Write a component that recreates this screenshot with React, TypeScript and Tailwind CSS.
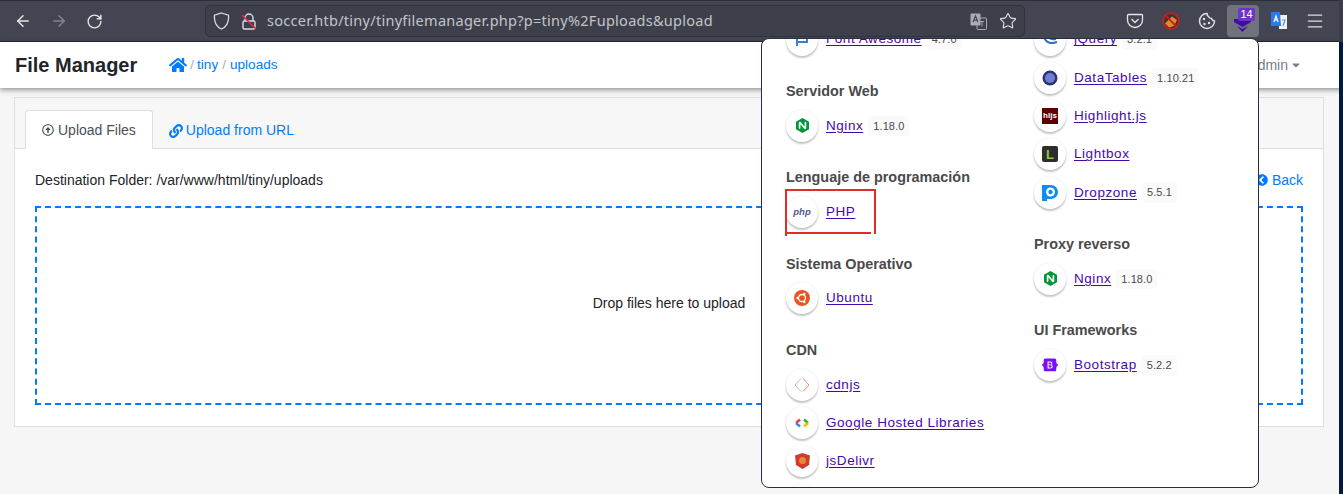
import { ReactNode } from 'react'
import { ArrowLeft, ArrowRight, RotateCw, Star, Menu } from 'lucide-react'
import { FaHome, FaLink, FaRegArrowAltCircleUp, FaChevronCircleLeft, FaCaretDown } from 'react-icons/fa'
import { SiNginx, SiBootstrap } from 'react-icons/si'

const Circle = ({ children }: { children?: ReactNode }) => (
    <div className="flex h-8 w-8 shrink-0 items-center justify-center rounded-full bg-white shadow-[0_2px_2px_rgba(0,0,0,0.22),0_0_2px_rgba(0,0,0,0.1)]">
        {children}
    </div>
)

const Tech = ({ icon, name, version }: { icon: ReactNode; name: string; version?: string }) => (
    <div className="flex h-8 items-center">
        <Circle>{icon}</Circle>
        <span className="ml-2 text-[13.5px] tracking-[0.55px] text-[#4608ad] underline underline-offset-2">{name}</span>
        {version && <span className="ml-[5px] rounded-[4px] bg-[#fafafa] px-[5px] py-[2px] text-[11px] tracking-[0.1px] text-[#4a4a4a]">{version}</span>}
    </div>
)

const Heading = ({ children }: { children: ReactNode }) => (
    <div className="mt-[27.500px] mb-[10.800px] h-4 text-[14.4px] leading-4 font-bold text-[#4a4a4a]">{children}</div>
)

const nginx = <SiNginx className="text-[#009639]" size={15} />

const App = () => {
    return (
        <div className="relative h-[494px] w-[1343px] overflow-hidden bg-[#f6f6f6] font-['Liberation_Sans',sans-serif] text-[14px] text-[#212529]">
            {/* browser toolbar */}
            <div className="flex h-[42px] items-center border-t border-b border-t-[#2b2e38] border-b-[#23252d] bg-[#434652]">
                <div className="flex w-[205px] items-center gap-[18px] pl-[14px]">
                    <ArrowLeft size={18} className="text-[#e6e6e8]" />
                    <ArrowRight size={18} className="text-[#83858d]" />
                    <RotateCw size={17} className="text-[#e6e6e8]" />
                </div>
                <div className="flex h-[32px] w-[820px] items-center rounded-[5px] border border-[#30323b] bg-[#3d404b] pl-[7px]">
                    <svg width="17" height="18" viewBox="0 0 17 18" fill="none" stroke="#dcdde0" strokeWidth="1.3">
                        <path d="M8.500 1L15.500 3.200C16 9 14 14.500 8.500 17 3 14.500 1 9 1.500 3.200z" />
                    </svg>
                    <svg className="ml-[11px]" width="16" height="17" viewBox="0 0 16 17" fill="none" stroke="#dcdde0" strokeWidth="1.4">
                        <path d="M4 8V5a4 4 0 0 1 8 0v3" />
                        <rect x="2" y="8" width="12" height="8" rx="1.500" />
                        <path d="M1 2l14 14" stroke="#e22850" strokeWidth="1.500" />
                    </svg>
                    <span className="ml-[10px] font-['Noto_Sans',sans-serif] text-[14.5px] tracking-[0.27px] text-[#c3c4c8]">soccer.htb/tiny/tinyfilemanager.php?p=tiny%2Fuploads&amp;upload</span>
                    <div className="ml-auto flex items-center gap-[12px] pr-[7px]">
                        <svg width="17" height="17" viewBox="0 0 17 17">
                            <rect x="0.500" y="0.500" width="10" height="12" rx="1" fill="#a9abb1" />
                            <rect x="7" y="5" width="9.500" height="11.500" rx="1" fill="none" stroke="#a9abb1" />
                            <path d="M3 9l2.500-6 2.500 6M3.800 7.200h3.400" fill="none" stroke="#3d404b" strokeWidth="1.100" />
                            <path d="M10 8.500h4M12 8.500v5" stroke="#a9abb1" />
                        </svg>
                        <Star size={18} className="text-[#dcdde0]" strokeWidth={1.5} />
                    </div>
                </div>
                <div className="ml-[101px] flex items-center">
                    <svg width="18" height="18" viewBox="0 0 18 18" fill="none" stroke="#e6e6e8" strokeWidth="1.300">
                        <path d="M2.500 2.500h13c.6 0 1 .4 1 1V8a7.500 7.500 0 0 1-15 0V3.500c0-.6.4-1 1-1z" />
                        <path d="M5.500 7l3.500 3.500L12.500 7" />
                    </svg>
                    <svg className="ml-[18px]" width="18" height="18" viewBox="0 0 18 18">
                        <circle cx="9" cy="9" r="7.800" fill="#3a3436" stroke="#c81e1e" strokeWidth="1.800" />
                        <path d="M3 11.500L10 4.500l5 3.500-3 6-5 1.500z" fill="#e8882a" />
                        <path d="M3.200 3.200l11.600 11.600" stroke="#c81e1e" strokeWidth="1.800" />
                    </svg>
                    <svg className="ml-[18px]" width="18" height="18" viewBox="0 0 18 18" fill="none" stroke="#e0e0e3" strokeWidth="1.500">
                        <path d="M9 1.500a7.500 7.500 0 1 0 7.500 7.500 3.500 3.500 0 0 1-3-2.500 3.500 3.500 0 0 1-3-2A3.500 3.500 0 0 1 9 1.500z" />
                        <circle cx="6" cy="7" r="1.200" fill="#e0e0e3" stroke="none" />
                        <circle cx="6.500" cy="12" r="1.200" fill="#e0e0e3" stroke="none" />
                        <circle cx="11" cy="11" r="1.200" fill="#e0e0e3" stroke="none" />
                    </svg>
                    <div className="relative ml-[11px] flex h-[32px] w-[32px] items-center justify-center rounded-[4px] bg-[#70727c]">
                        <svg className="mt-[9px] mr-[1px]" width="17" height="13" viewBox="0 0 17 13" fill="#3f0ca8">
                            <path d="M0 0h17v3L8.500 8 0 3z" />
                            <path d="M3 7l5.500 3L14 7l-5.500 6z" />
                        </svg>
                        <div className="absolute top-[3px] left-[11px] w-[17px] rounded-[2px] bg-[#6f35c4] text-center text-[11px] leading-[13px] text-white">14</div>
                    </div>
                    <svg className="ml-[11px]" width="18" height="18" viewBox="0 0 18 18">
                        <path d="M9 3h8v14H9z" fill="#f2f2f2" />
                        <path d="M1 0h9l1 14H1z" fill="#2a7be8" />
                        <path d="M4 10l2-6 2 6M4.600 8h2.800" fill="none" stroke="#fff" strokeWidth="1.200" />
                        <path d="M12 8h3l-2 6" fill="none" stroke="#5a8fd8" strokeWidth="1.200" />
                    </svg>
                    <Menu size={20} className="ml-[17px] text-[#dcdde0]" strokeWidth={1.5} />
                </div>
            </div>

            {/* page navbar */}
            <div className="relative flex h-[46px] items-center bg-white pl-[15px] shadow-[0_2px_5px_rgba(0,0,0,0.4)]">
                <span className="text-[20px] font-bold text-[#212529]">File Manager</span>
                <div className="ml-[32px] flex items-center text-[13.6px] text-[#007bff]">
                    <FaHome size={18} />
                    <span className="mx-[3px] text-[#a8adb2]">/</span>
                    <span>tiny</span>
                    <span className="mx-[4px] text-[#a8adb2]">/</span>
                    <span>uploads</span>
                </div>
                <div className="mr-[41px] ml-auto flex items-center text-[14px] text-[#7b7e82]">
                    <span>Admin</span>
                    <FaCaretDown size={12} className="ml-[2px]" />
                </div>
            </div>

            {/* upload card */}
            <div className="mx-[14px] mt-[9px] h-[330px] w-[1310px] border border-[#dfdfdf]">
                <div className="flex h-[51px] items-end border-b border-[#dfdfdf] bg-[#f7f7f7] pl-[10px]">
                    <div className="mb-[-1px] flex h-[39px] items-center gap-[4px] rounded-t-[3px] border border-b-0 border-[#dfdfdf] bg-white px-[16px] text-[#495057]">
                        <FaRegArrowAltCircleUp size={12} />
                        <span>Upload Files</span>
                    </div>
                    <div className="flex h-[39px] items-center gap-[3px] pt-[4px] pr-[17px] pl-[16px] text-[#007bff]">
                        <FaLink size={14} />
                        <span>Upload from URL</span>
                    </div>
                </div>
                <div className="h-[277px] bg-white px-[20px] pt-[22px]">
                    <div className="flex h-[18px] items-center justify-between">
                        <span>Destination Folder: /var/www/html/tiny/uploads</span>
                        <span className="flex items-center gap-[4px] text-[#007bff]">
                            <FaChevronCircleLeft size={12} />
                            Back
                        </span>
                    </div>
                    <div className="mt-[17px] flex h-[199px] items-center justify-center border-2 border-dashed border-[#007bff] pb-[4px]">
                        Drop files here to upload
                    </div>
                </div>
            </div>

            <div className="absolute top-0 right-0 h-[42px] w-[4px] bg-[#3a3d47]" />
            <div className="absolute top-[42px] right-0 bottom-0 w-[4px] bg-[#06193a]" />

            {/* wappalyzer popup */}
            <div className="absolute top-[38px] left-[761px] flex h-[450px] w-[498px] overflow-hidden rounded-[8px] border border-[#2d2b45] bg-white pl-[24px]">
                <div className="mt-[-16px] w-[248px] pt-[0.500px]">
                    <Tech
                        icon={
                            <svg width="16" height="16" viewBox="0 0 16 16" fill="none" stroke="#3b7dd8" strokeWidth="2">
                                <path d="M3 2v12M3 3h10v7H3" />
                            </svg>
                        }
                        name="Font Awesome"
                        version="4.7.0"
                    />
                    <Heading>Servidor Web</Heading>
                    <Tech icon={nginx} name="Nginx" version="1.18.0" />
                    <Heading>Lenguaje de programación</Heading>
                    <Tech icon={<span className="text-[9.500px] font-semibold italic text-[#4f5b93]">php</span>} name="PHP" />
                    <Heading>Sistema Operativo</Heading>
                    <Tech
                        icon={
                            <svg width="16" height="16" viewBox="0 0 16 16" fill="none">
                                <circle cx="8" cy="8" r="8" fill="#e95420" />
                                <circle cx="8" cy="8" r="3.500" stroke="#fff" strokeWidth="1.300" />
                                <circle cx="3.500" cy="8" r="1.200" fill="#fff" />
                                <circle cx="10.300" cy="4" r="1.200" fill="#fff" />
                                <circle cx="10.300" cy="12" r="1.200" fill="#fff" />
                            </svg>
                        }
                        name="Ubuntu"
                    />
                    <Heading>CDN</Heading>
                    <div className="flex flex-col gap-[6.300px]">
                        <Tech
                            icon={
                                <svg width="16" height="16" viewBox="0 0 16 16" fill="none" strokeWidth="1">
                                    <path d="M7 1.500L1 8l6 6.500" stroke="#bdbdbd" />
                                    <path d="M9 1.500L15 8l-6 6.500" stroke="#f58a6e" />
                                </svg>
                            }
                            name="cdnjs"
                        />
                        <Tech
                            icon={
                                <svg width="16" height="10" viewBox="0 0 16 10" fill="none" strokeWidth="2.500">
                                    <path d="M6 1.500L2 5" stroke="#ea4335" />
                                    <path d="M2 5l4 3.500" stroke="#4285f4" />
                                    <path d="M10 1.500L14 5" stroke="#34a853" />
                                    <path d="M14 5l-4 3.500" stroke="#fbbc05" />
                                </svg>
                            }
                            name="Google Hosted Libraries"
                        />
                        <Tech
                            icon={
                                <svg width="15" height="16" viewBox="0 0 15 16">
                                    <path d="M7.500 0L15 2.500 14 12l-6.500 4L1 12 0 2.500z" fill="#d13b2e" />
                                    <circle cx="7.500" cy="7.500" r="3.500" fill="#e8863a" />
                                </svg>
                            }
                            name="jsDelivr"
                        />
                        <Circle />
                    </div>
                </div>
                <div className="mt-[-16px] flex flex-col pt-[0.500px]">
                    <div className="flex flex-col gap-[6.300px]">
                        <Tech
                            icon={
                                <svg width="18" height="18" viewBox="0 0 18 18" fill="none" stroke="#2b6cc4" strokeWidth="2">
                                    <path d="M3 4c0 6 5 10 13 7" />
                                    <path d="M7 3c0 4 3 6 8 5" />
                                </svg>
                            }
                            name="jQuery"
                            version="3.2.1"
                        />
                        <Tech
                            icon={
                                <svg width="16" height="16" viewBox="0 0 16 16">
                                    <circle cx="8" cy="8" r="7.500" fill="#2c3570" />
                                    <circle cx="8" cy="8" r="5" fill="#6f7fd6" />
                                </svg>
                            }
                            name="DataTables"
                            version="1.10.21"
                        />
                        <Tech
                            icon={<div className="flex h-4 w-4 items-center justify-center bg-[#600000] text-[8px] font-bold text-white">hljs</div>}
                            name="Highlight.js"
                        />
                        <Tech
                            icon={<div className="flex h-4 w-4 items-center justify-center rounded-[2px] bg-[#2d2d2d] text-[13px] leading-none font-bold text-[#8cc63f]">L</div>}
                            name="Lightbox"
                        />
                        <Tech
                            icon={
                                <svg width="16" height="16" viewBox="0 0 16 16">
                                    <path d="M0 0h9a7 7 0 0 1 0 14H5v2H0z" fill="#0d8cf2" />
                                    <circle cx="8.500" cy="7" r="4.500" fill="#fff" />
                                    <circle cx="8.500" cy="7" r="2.200" fill="#0d8cf2" />
                                </svg>
                            }
                            name="Dropzone"
                            version="5.5.1"
                        />
                    </div>
                    <Heading>Proxy reverso</Heading>
                    <Tech icon={nginx} name="Nginx" version="1.18.0" />
                    <Heading>UI Frameworks</Heading>
                    <Tech icon={<SiBootstrap className="text-[#7a10f7]" size={16} />} name="Bootstrap" version="5.2.2" />
                </div>
            </div>

            {/* red annotation around PHP */}
            <svg className="absolute top-[188px] left-[784px]" width="93" height="49" viewBox="0 0 93 49" fill="none" stroke="#e22c2c" strokeWidth="2">
                <path d="M2 48V2H91V46M2 45H87" />
            </svg>
        </div>
    )
}

export default App
